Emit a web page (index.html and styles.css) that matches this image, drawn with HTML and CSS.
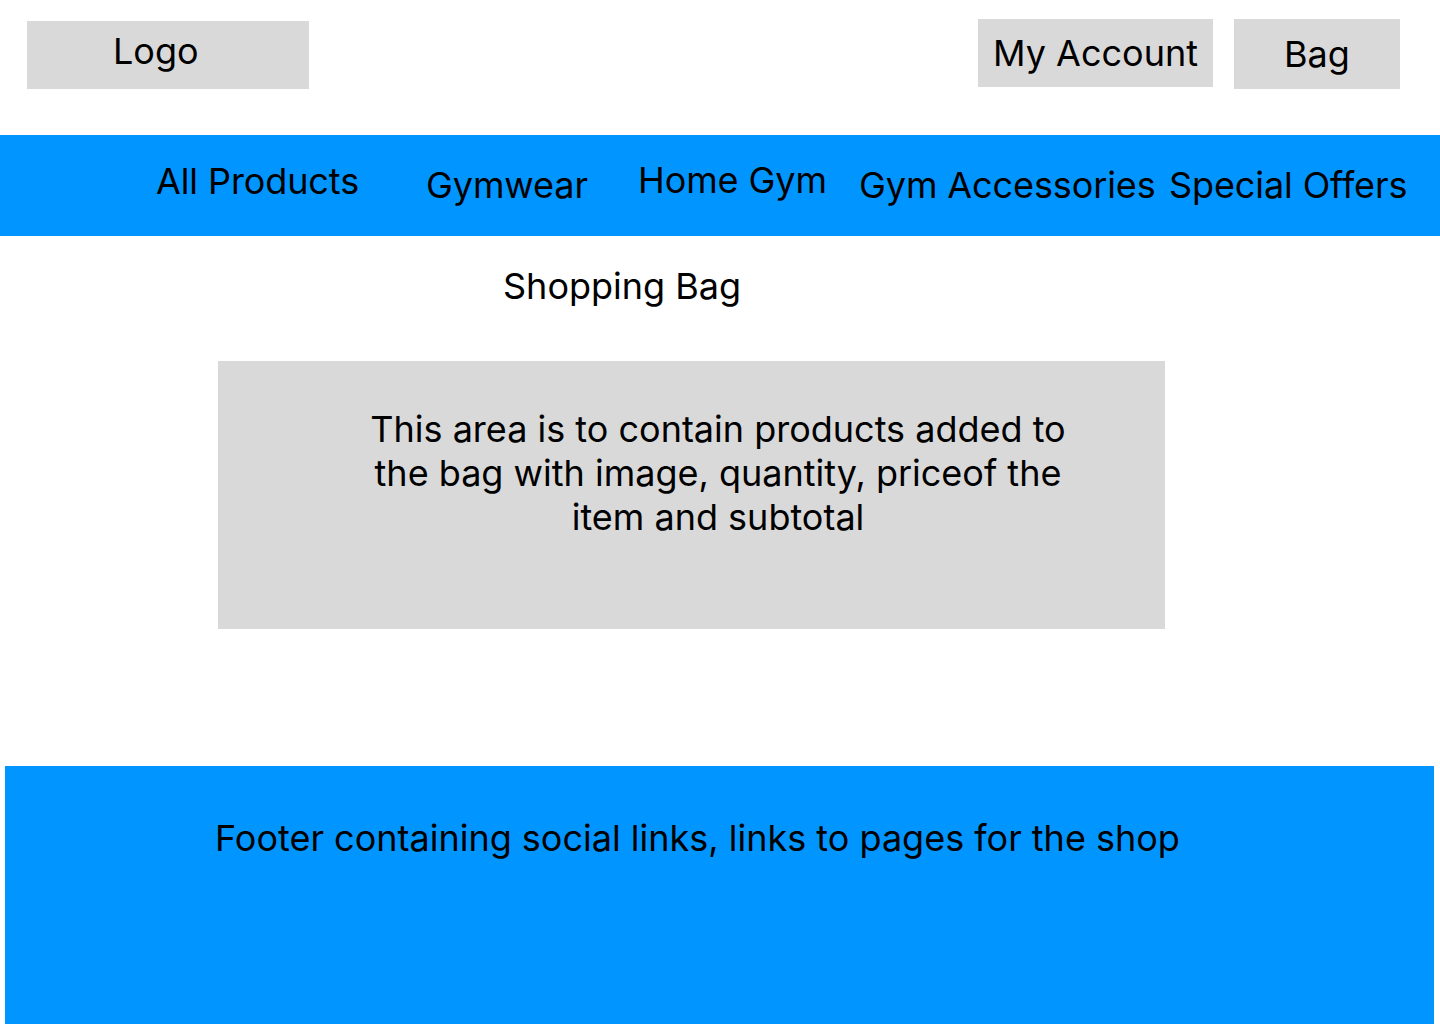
FILE: index.html
```html
<!DOCTYPE html>
<html lang="en">
<head>
<meta charset="utf-8">
<title>Shopping Bag</title>
<link rel="stylesheet" href="styles.css">
</head>
<body>
<header class="site-header">
  <div class="logo">Logo</div>
  <div class="header-actions">
    <a class="header-btn account">My Account</a>
    <a class="header-btn bag">Bag</a>
  </div>
</header>
<nav class="main-nav">
  <a class="nav-item nav-all">All Products</a>
  <a class="nav-item nav-gymwear">Gymwear</a>
  <a class="nav-item nav-home">Home Gym</a>
  <a class="nav-item nav-acc">Gym Accessories</a>
  <a class="nav-item nav-offers">Special Offers</a>
</nav>
<main class="content">
  <h1 class="page-title">Shopping Bag</h1>
  <section class="bag-area">
    <p class="bag-text">This area is to contain products added to<br>the bag with image, quantity, priceof the<br>item and subtotal</p>
  </section>
</main>
<footer class="site-footer">
  <p class="footer-text">Footer containing social links, links to pages for the shop</p>
</footer>
</body>
</html>
```

FILE: styles.css
```css
* { box-sizing: border-box; }

html, body {
  margin: 0;
  padding: 0;
}

body {
  font-family: "Inter", "Roboto", "Liberation Sans", sans-serif;
  font-size: 36px;
  line-height: normal;
  color: #000;
  background: #fff;
}

a { color: inherit; text-decoration: none; }

.site-header {
  display: flex;
  align-items: flex-start;
  height: 135px;
  padding: 0 40px 0 27px;
}

.logo {
  margin-top: 21px;
  width: 282px;
  height: 68px;
  background: #d9d9d9;
  padding: 8px 0 0 86px;
}

.header-actions {
  margin-left: auto;
  margin-top: 19px;
  display: flex;
  align-items: flex-start;
  gap: 21px;
}

.header-btn {
  display: flex;
  align-items: center;
  justify-content: center;
  background: #d9d9d9;
  white-space: nowrap;
}

.account { width: 235px; height: 68px; }
.bag { width: 166px; height: 70px; }

.main-nav {
  display: flex;
  align-items: flex-start;
  height: 101px;
  background: #0095ff;
  padding-left: 156px;
  letter-spacing: -0.1px;
}

.nav-item { white-space: nowrap; }
.nav-all { width: 270px; margin-top: 24px; }
.nav-gymwear { width: 212px; margin-top: 28px; }
.nav-home { width: 221px; margin-top: 23px; }
.nav-acc { width: 310px; margin-top: 28px; }
.nav-offers { margin-top: 28px; }

.content {
  padding-top: 28px;
}

.page-title {
  margin: 0;
  font-size: 36px;
  font-weight: 400;
  padding-left: 503px;
}

.bag-area {
  margin: 53px 0 0 218px;
  width: 947px;
  height: 268px;
  background: #d9d9d9;
  padding-top: 46px;
}

.bag-text {
  margin: 0 0 0 140px;
  width: 720px;
  text-align: center;
}

.site-footer {
  margin: 137px 6px 0 5px;
  height: 258px;
  background: #0095ff;
  padding: 50px 0 0 210px;
}

.footer-text {
  margin: 0;
  white-space: nowrap;
}
```
